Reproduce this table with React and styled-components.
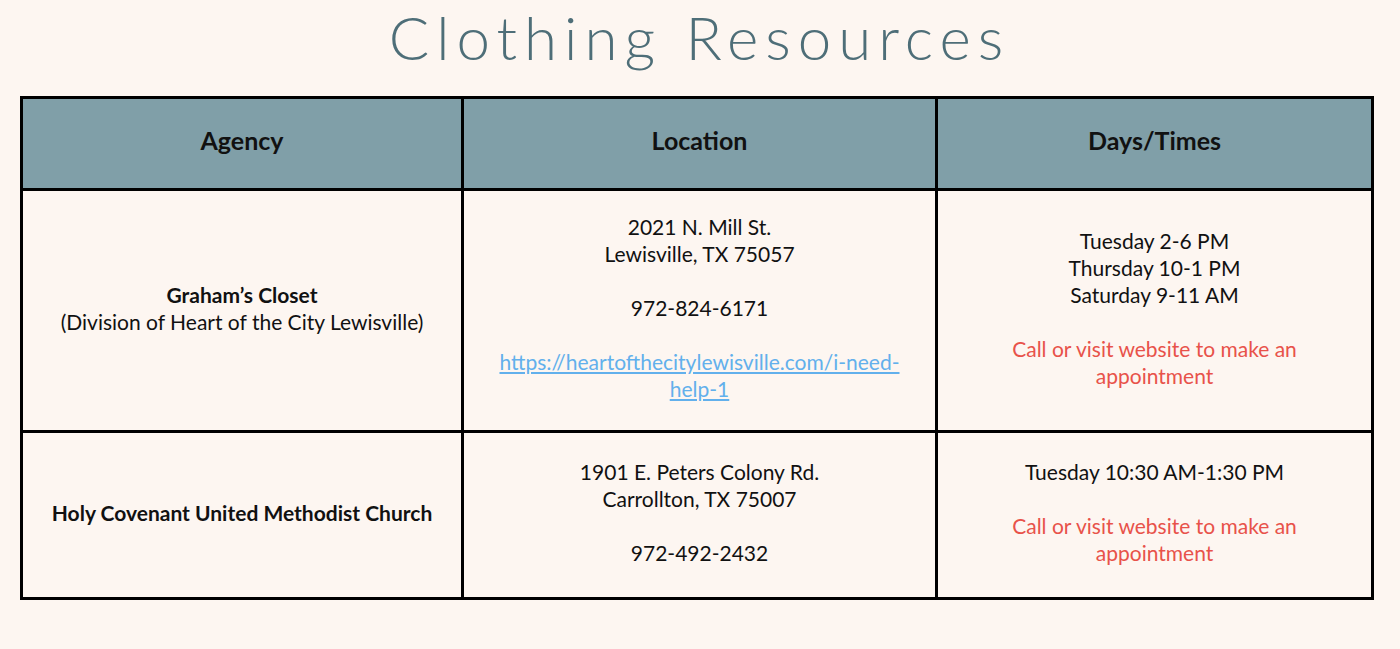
import React from "react";
import styled, { createGlobalStyle } from "styled-components";

const Global = createGlobalStyle`
  html, body { margin: 0; padding: 0; background: #fdf6f1; }
  body { font-family: "Lato", "Liberation Sans", sans-serif; color: #111; }
`;

const Page = styled.div`
  width: 1400px;
  height: 649px;
  padding: 0 27px 0 20px;
  box-sizing: border-box;
  background: #fdf6f1;
`;

const Title = styled.h1`
  margin: 0;
  height: 96px;
  text-align: center;
  font-family: "Lato", "Liberation Sans", sans-serif;
  font-weight: 300;
  font-size: 60px;
  line-height: 75px;
  letter-spacing: 7px;
  color: #4e6e78;
  padding-left: 6px;
`;

const Table = styled.table`
  width: 1351px;
  border-collapse: collapse;
  table-layout: fixed;
  border: 3.5px solid #000;
`;

const Head = styled.th`
  height: 82px;
  background: #809fa8;
  border: 3.5px solid #000;
  font-size: 25px;
  font-weight: 700;
  text-align: center;
  vertical-align: middle;
  padding: 0 0 7px;
`;

const Cell = styled.td`
  height: ${(p) => p.$h}px;
  border: 3.5px solid #000;
  text-align: center;
  vertical-align: middle;
  font-size: 21px;
  line-height: 27px;
  padding: 0 0 6px;
`;

const Line = styled.div`
  min-height: 27px;
  font-weight: ${(p) => (p.$bold ? 700 : 400)};
  color: ${(p) => (p.$red ? "#e8524a" : "#111")};
`;

const Link = styled.a`
  color: #62b0ec;
  text-decoration: underline;
`;

export default function App() {
  return (
    <>
      <Global />
      <Page>
        <Title>Clothing Resources</Title>
        <Table>
          <colgroup>
            <col style={{ width: 441 }} />
            <col style={{ width: 474 }} />
            <col style={{ width: 436 }} />
          </colgroup>
          <thead>
            <tr>
              <Head>Agency</Head>
              <Head>Location</Head>
              <Head>Days/Times</Head>
            </tr>
          </thead>
          <tbody>
            <tr>
              <Cell $h={233}>
                <Line $bold>Graham’s Closet</Line>
                <Line>(Division of Heart of the City Lewisville)</Line>
              </Cell>
              <Cell $h={233}>
                <Line>2021 N. Mill St.</Line>
                <Line>Lewisville, TX 75057</Line>
                <Line />
                <Line>972-824-6171</Line>
                <Line />
                <Line>
                  <Link href="#">
                    https://heartofthecitylewisville.com/i-need-
                    <br />
                    help-1
                  </Link>
                </Line>
              </Cell>
              <Cell $h={233}>
                <Line>Tuesday 2-6 PM</Line>
                <Line>Thursday 10-1 PM</Line>
                <Line>Saturday 9-11 AM</Line>
                <Line />
                <Line $red>
                  Call or visit website to make an
                  <br />
                  appointment
                </Line>
              </Cell>
            </tr>
            <tr>
              <Cell $h={158}>
                <Line $bold>Holy Covenant United Methodist Church</Line>
              </Cell>
              <Cell $h={158}>
                <Line>1901 E. Peters Colony Rd.</Line>
                <Line>Carrollton, TX 75007</Line>
                <Line />
                <Line>972-492-2432</Line>
              </Cell>
              <Cell $h={158}>
                <Line>Tuesday 10:30 AM-1:30 PM</Line>
                <Line />
                <Line $red>
                  Call or visit website to make an
                  <br />
                  appointment
                </Line>
              </Cell>
            </tr>
          </tbody>
        </Table>
      </Page>
    </>
  );
}
